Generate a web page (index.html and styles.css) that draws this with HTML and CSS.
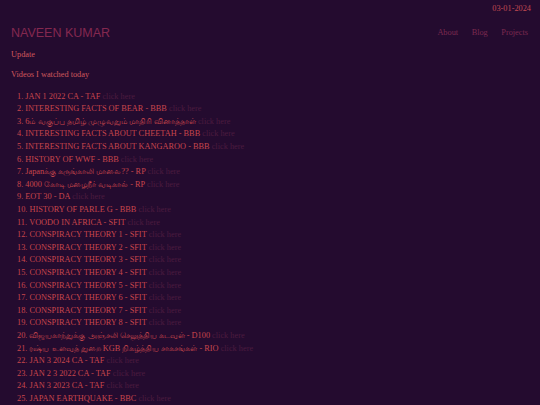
FILE: index.html
```html
<!DOCTYPE html>
<html>
<head>
<meta charset="utf-8">
<link rel="stylesheet" href="styles.css">
</head>
<body>
<div class="date">03-01-2024</div>
<header class="header">
  <div class="brand">NAVEEN KUMAR</div>
  <nav class="nav">
    <a href="#">About</a>
    <a href="#">Blog</a>
    <a href="#">Projects</a>
  </nav>
</header>
<p class="update">Update</p>
<p class="sub">Videos I watched today</p>
<ol class="list">
  <li>JAN 1 2022 CA - TAF <a href="#">click here</a></li>
  <li>INTERESTING FACTS OF BEAR - BBB <a href="#">click here</a></li>
  <li>6ம் வகுப்பு தமிழ் முழுவதும் மாதிரி வினாத்தாள் <a href="#">click here</a></li>
  <li>INTERESTING FACTS ABOUT CHEETAH - BBB <a href="#">click here</a></li>
  <li>INTERESTING FACTS ABOUT KANGAROO - BBB <a href="#">click here</a></li>
  <li>HISTORY OF WWF - BBB <a href="#">click here</a></li>
  <li>Japanக்கு கருங்காலி மாலை?? - RP <a href="#">click here</a></li>
  <li>4000 கோடி மழைநீர் வடிகால் - RP <a href="#">click here</a></li>
  <li>EOT 30 - DA <a href="#">click here</a></li>
  <li>HISTORY OF PARLE G - BBB <a href="#">click here</a></li>
  <li>VOODO IN AFRICA - SFIT <a href="#">click here</a></li>
  <li>CONSPIRACY THEORY 1 - SFIT <a href="#">click here</a></li>
  <li>CONSPIRACY THEORY 2 - SFIT <a href="#">click here</a></li>
  <li>CONSPIRACY THEORY 3 - SFIT <a href="#">click here</a></li>
  <li>CONSPIRACY THEORY 4 - SFIT <a href="#">click here</a></li>
  <li>CONSPIRACY THEORY 5 - SFIT <a href="#">click here</a></li>
  <li>CONSPIRACY THEORY 6 - SFIT <a href="#">click here</a></li>
  <li>CONSPIRACY THEORY 7 - SFIT <a href="#">click here</a></li>
  <li>CONSPIRACY THEORY 8 - SFIT <a href="#">click here</a></li>
  <li>விஜயகாந்துக்கு அஞ்சலி செலுத்திய கடவுள் - D100 <a href="#">click here</a></li>
  <li>ரஷ்ய உளவுத் துறை KGB நிகழ்த்திய சாகசங்கள் - RIO <a href="#">click here</a></li>
  <li>JAN 3 2024 CA - TAF <a href="#">click here</a></li>
  <li>JAN 2 3 2022 CA - TAF <a href="#">click here</a></li>
  <li>JAN 3 2023 CA - TAF <a href="#">click here</a></li>
  <li>JAPAN EARTHQUAKE - BBC <a href="#">click here</a></li>
</ol>
</body>
</html>
```
FILE: styles.css
```css
html, body {
  margin: 0;
  padding: 0;
  background: #240b2f;
}
body {
  padding: 3px 9px 0 11px;
  font-family: "Liberation Serif", serif;
  color: #c8464c;
  font-size: 8.3px;
}
.date {
  text-align: right;
  line-height: 12px;
  color: #c24a52;
}
.header {
  display: flex;
  justify-content: space-between;
  align-items: center;
  height: 16px;
  margin-top: 9.5px;
}
.brand {
  font-family: "Liberation Sans", sans-serif;
  font-size: 12.5px;
  color: #84284f;
}
.nav {
  display: flex;
  gap: 13.5px;
  padding-right: 3px;
}
.nav a {
  font-size: 8.3px;
  color: #7c2a50;
  text-decoration: none;
}
.update, .sub {
  margin: 0;
  line-height: 12px;
  color: #d0585c;
}
.update { margin-top: 8.5px; }
.sub { margin-top: 8px; }
.list {
  list-style: decimal inside;
  margin: 9.7px 0 0 0;
  padding-left: 6px;
}
.list li {
  line-height: 12.6px;
  height: 12.6px;
  white-space: nowrap;
}
.list a {
  color: #4c1b3f;
  text-decoration: none;
}
```
